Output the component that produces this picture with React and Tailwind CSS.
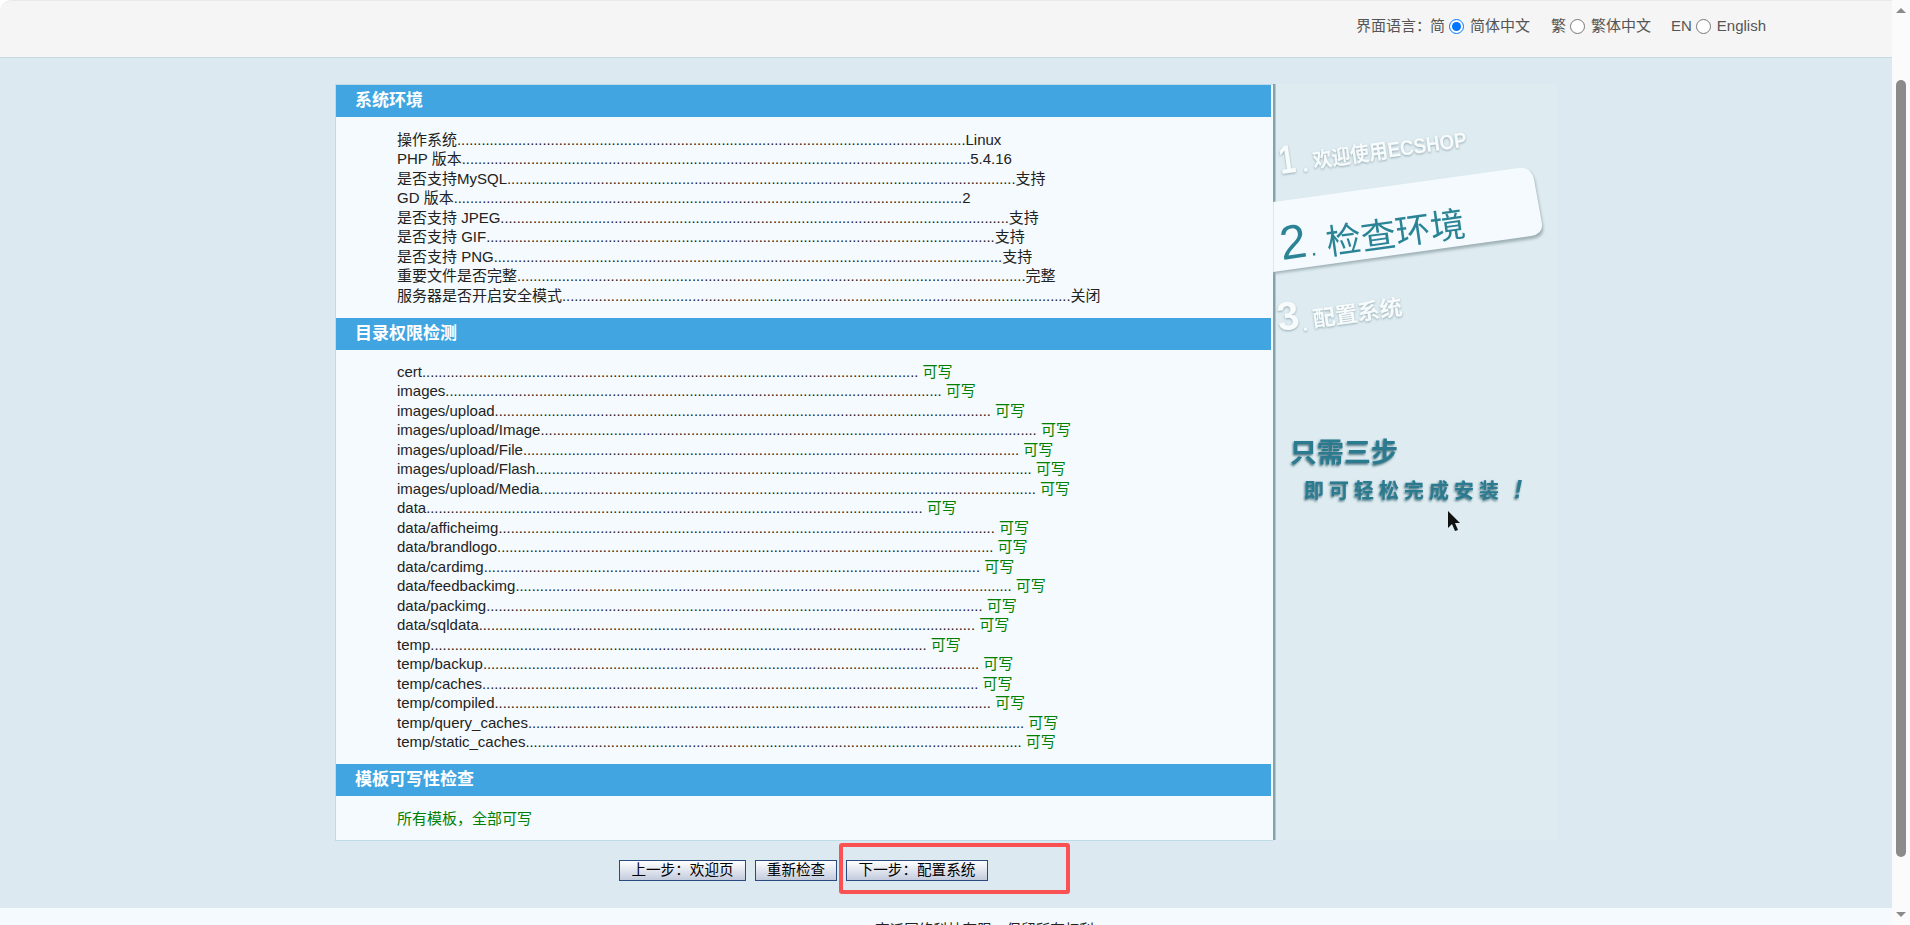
import React from 'react';

const SANS = 'font-["Liberation_Sans","Noto_Sans_CJK_SC",sans-serif]';

const envRows = [
  ['操作系统', 'Linux'],
  ['PHP 版本', '5.4.16'],
  ['是否支持MySQL', '支持'],
  ['GD 版本', '2'],
  ['是否支持 JPEG', '支持'],
  ['是否支持 GIF', '支持'],
  ['是否支持 PNG', '支持'],
  ['重要文件是否完整', '完整'],
  ['服务器是否开启安全模式', '关闭'],
];

const dirRows = [
  'cert',
  'images',
  'images/upload',
  'images/upload/Image',
  'images/upload/File',
  'images/upload/Flash',
  'images/upload/Media',
  'data',
  'data/afficheimg',
  'data/brandlogo',
  'data/cardimg',
  'data/feedbackimg',
  'data/packimg',
  'data/sqldata',
  'temp',
  'temp/backup',
  'temp/caches',
  'temp/compiled',
  'temp/query_caches',
  'temp/static_caches',
];

const SectionTitle = ({ children }) => (
  <div className="h-8 mr-[2px] pl-[19px] bg-[#41a5e1] text-white text-[17px] font-bold leading-[31px]">
    {children}
  </div>
);

const Dots = ({ count }) => <span className="text-[14.65px]">{'.'.repeat(count)}</span>;

const StepsPicture = () => (
  <svg width="284" height="756" viewBox="0 0 284 756" className="block">
    <defs>
      <filter id="soft" x="-10%" y="-10%" width="120%" height="130%">
        <feGaussianBlur stdDeviation="1.6" />
      </filter>
      <filter id="glow" x="-10%" y="-20%" width="120%" height="140%">
        <feDropShadow dx="0" dy="1" stdDeviation="1" floodColor="#93a9b2" floodOpacity="1" />
      </filter>
      <filter id="dark" x="-10%" y="-20%" width="120%" height="140%">
        <feDropShadow dx="-1" dy="1.5" stdDeviation="0.8" floodColor="#1c4a58" floodOpacity="0.8" />
      </filter>
    </defs>
    <rect x="0" y="0" width="284" height="756" fill="#deecf1" />
    <rect x="0" y="0" width="2.5" height="756" fill="#85a3ab" />
    <path d="M0 120 L246 86 Q259 84 262 97 L270 142 Q272 153 259 155 L0 190 Z" fill="#9fb0b6" filter="url(#soft)" />
    <path d="M0 118 L245 84 Q258 82 261 95 L269 140 Q270 150 258 152 L0 188 Z" fill="#f4fafd" />
    <path d="M0 118 L0 188" stroke="#b5dbe8" strokeWidth="1" />
    <g fill="#f7fbfc" filter="url(#glow)" fontWeight="700" fontFamily="'Liberation Sans','Noto Sans CJK SC',sans-serif">
      <text x="8" y="90" fontSize="40" transform="rotate(-8 8 90)" textLength="16" lengthAdjust="spacingAndGlyphs">1</text>
      <text x="30" y="88" fontSize="22" transform="rotate(-8 30 88)">.</text>
      <text x="41" y="84" fontSize="21" transform="rotate(-8 41 84)" textLength="155" lengthAdjust="spacingAndGlyphs">欢迎使用ECSHOP</text>
      <text x="6" y="247" fontSize="40" transform="rotate(-8 6 247)" textLength="22" lengthAdjust="spacingAndGlyphs">3</text>
      <text x="30" y="247" fontSize="20" transform="rotate(-8 30 247)">.</text>
      <text x="41" y="243" fontSize="22" transform="rotate(-8 41 243)" textLength="90" lengthAdjust="spacingAndGlyphs">配置系统</text>
    </g>
    <g fill="#2b8496" fontFamily="'Liberation Sans','Noto Sans CJK SC',sans-serif">
      <text x="9" y="176" fontSize="48" transform="rotate(-8 9 176)">2</text>
      <text x="38" y="172" fontSize="24" transform="rotate(-8 38 172)">.</text>
      <text x="55" y="171" fontSize="35" transform="rotate(-8 55 171)">检查环境</text>
    </g>
    <g fill="#2b7a90" filter="url(#dark)" fontWeight="700" fontFamily="'Noto Sans CJK SC',sans-serif">
      <text x="17" y="378" fontSize="27">只需三步</text>
      <text x="31" y="414" fontSize="20" letterSpacing="5">即可轻松完成安装</text>
      <text x="241" y="414" fontSize="25" fontStyle="italic" fontFamily="'Liberation Sans',sans-serif">!</text>
    </g>
    <path d="M175 427 L175 444 L179 440 L182 447 L185 446 L182 439 L187 439 Z" fill="#111" />
  </svg>
);

const LangChoice = ({ code, label, checked, className }) => (
  <span className={'flex items-center ' + className}>
    <span>{code}</span>
    <input type="radio" name="lang" defaultChecked={checked} className="w-[15px] h-[15px] m-0 ml-[4px] mr-[6px]" />
    <span>{label}</span>
  </span>
);

const NavButton = ({ children, className }) => (
  <button className={'h-[21px] border border-[#2b4a80] bg-gradient-to-b from-white to-[#c3cbdd] text-black text-[14.6px] leading-none ' + className}>
    {children}
  </button>
);

export default function App() {
  return (
    <div className={'relative h-[925px] w-[1910px] overflow-hidden flex bg-white text-[#222] ' + SANS}>
      <div className="flex-1 flex flex-col min-w-0">
        <div className="h-[58px] shrink-0 flex justify-end items-start pt-[14px] pr-[126px] bg-[#f5f5f5] border-b border-[#c4d9e2] border-t border-t-[#e9e9e9] rounded-tl-[12px] text-[15px] text-[#555]">
          <span className="-mr-[1px]">界面语言：</span>
          <LangChoice code="简" label="简体中文" checked className="" />
          <LangChoice code="繁" label="繁体中文" className="ml-[21px]" />
          <LangChoice code="EN" label="English" className="ml-[20px]" />
        </div>

        <div className="flex-1 bg-[#dce9f0] pt-[26px]">
          <div className="w-[1222px] mx-auto flex">
            <div className="w-[938px] h-[757px] bg-[#f4fafd] border-l border-t border-b border-[#bcdce8] text-[15px] leading-[19.5px]">
              <SectionTitle>系统环境</SectionTitle>
              <div className="pl-[61px] pt-[12.5px] pb-[12.5px] whitespace-nowrap">
                {envRows.map(([label, value]) => (
                  <div key={label} className="h-[19.5px]">
                    {label}
                    <Dots count={125} />
                    {value}
                  </div>
                ))}
              </div>
              <SectionTitle>目录权限检测</SectionTitle>
              <div className="pl-[61px] pt-[12px] pb-[12.5px] whitespace-nowrap">
                {dirRows.map((label) => (
                  <div key={label} className="h-[19.5px]">
                    {label}
                    <Dots count={122} />
                    {' '}
                    <span className="text-[#008000]">可写</span>
                  </div>
                ))}
              </div>
              <SectionTitle>模板可写性检查</SectionTitle>
              <div className="pl-[61px] pt-[13px] text-[#008000]">所有模板，全部可写</div>
            </div>
            <StepsPicture />
          </div>

          <div className="w-[1222px] mx-auto mt-[19px]">
            <div className="w-[938px] pr-[1px] flex justify-center gap-[9px]">
              <NavButton className="w-[127px]">上一步：欢迎页</NavButton>
              <NavButton className="w-[82px]">重新检查</NavButton>
              <NavButton className="w-[142px]">下一步：配置系统</NavButton>
            </div>
          </div>
        </div>

        <div className="h-[17px] shrink-0 bg-[#f4fafd] pl-[875px] pt-[13px] text-[14.6px] leading-[19px] whitespace-nowrap overflow-hidden">
          商派网络科技有限，保留所有权利
        </div>
      </div>

      <div className="w-[18px] shrink-0 flex flex-col items-center bg-[#fbfbfb] pt-[8px] pb-[8px]">
        <div className="w-0 h-0 border-l-[5px] border-r-[5px] border-b-[5px] border-l-transparent border-r-transparent border-b-[#8b8b8b]" />
        <div className="w-[10px] h-[777px] mt-[67px] rounded-[5px] bg-[#8b8b8b]" />
        <div className="w-0 h-0 mt-auto border-l-[5px] border-r-[5px] border-t-[5px] border-l-transparent border-r-transparent border-t-[#8b8b8b]" />
      </div>

      <div className="absolute left-[839px] top-[843px] w-[231px] h-[51px] border-[4px] border-[#fa5252] rounded-[3px]" />
    </div>
  );
}
